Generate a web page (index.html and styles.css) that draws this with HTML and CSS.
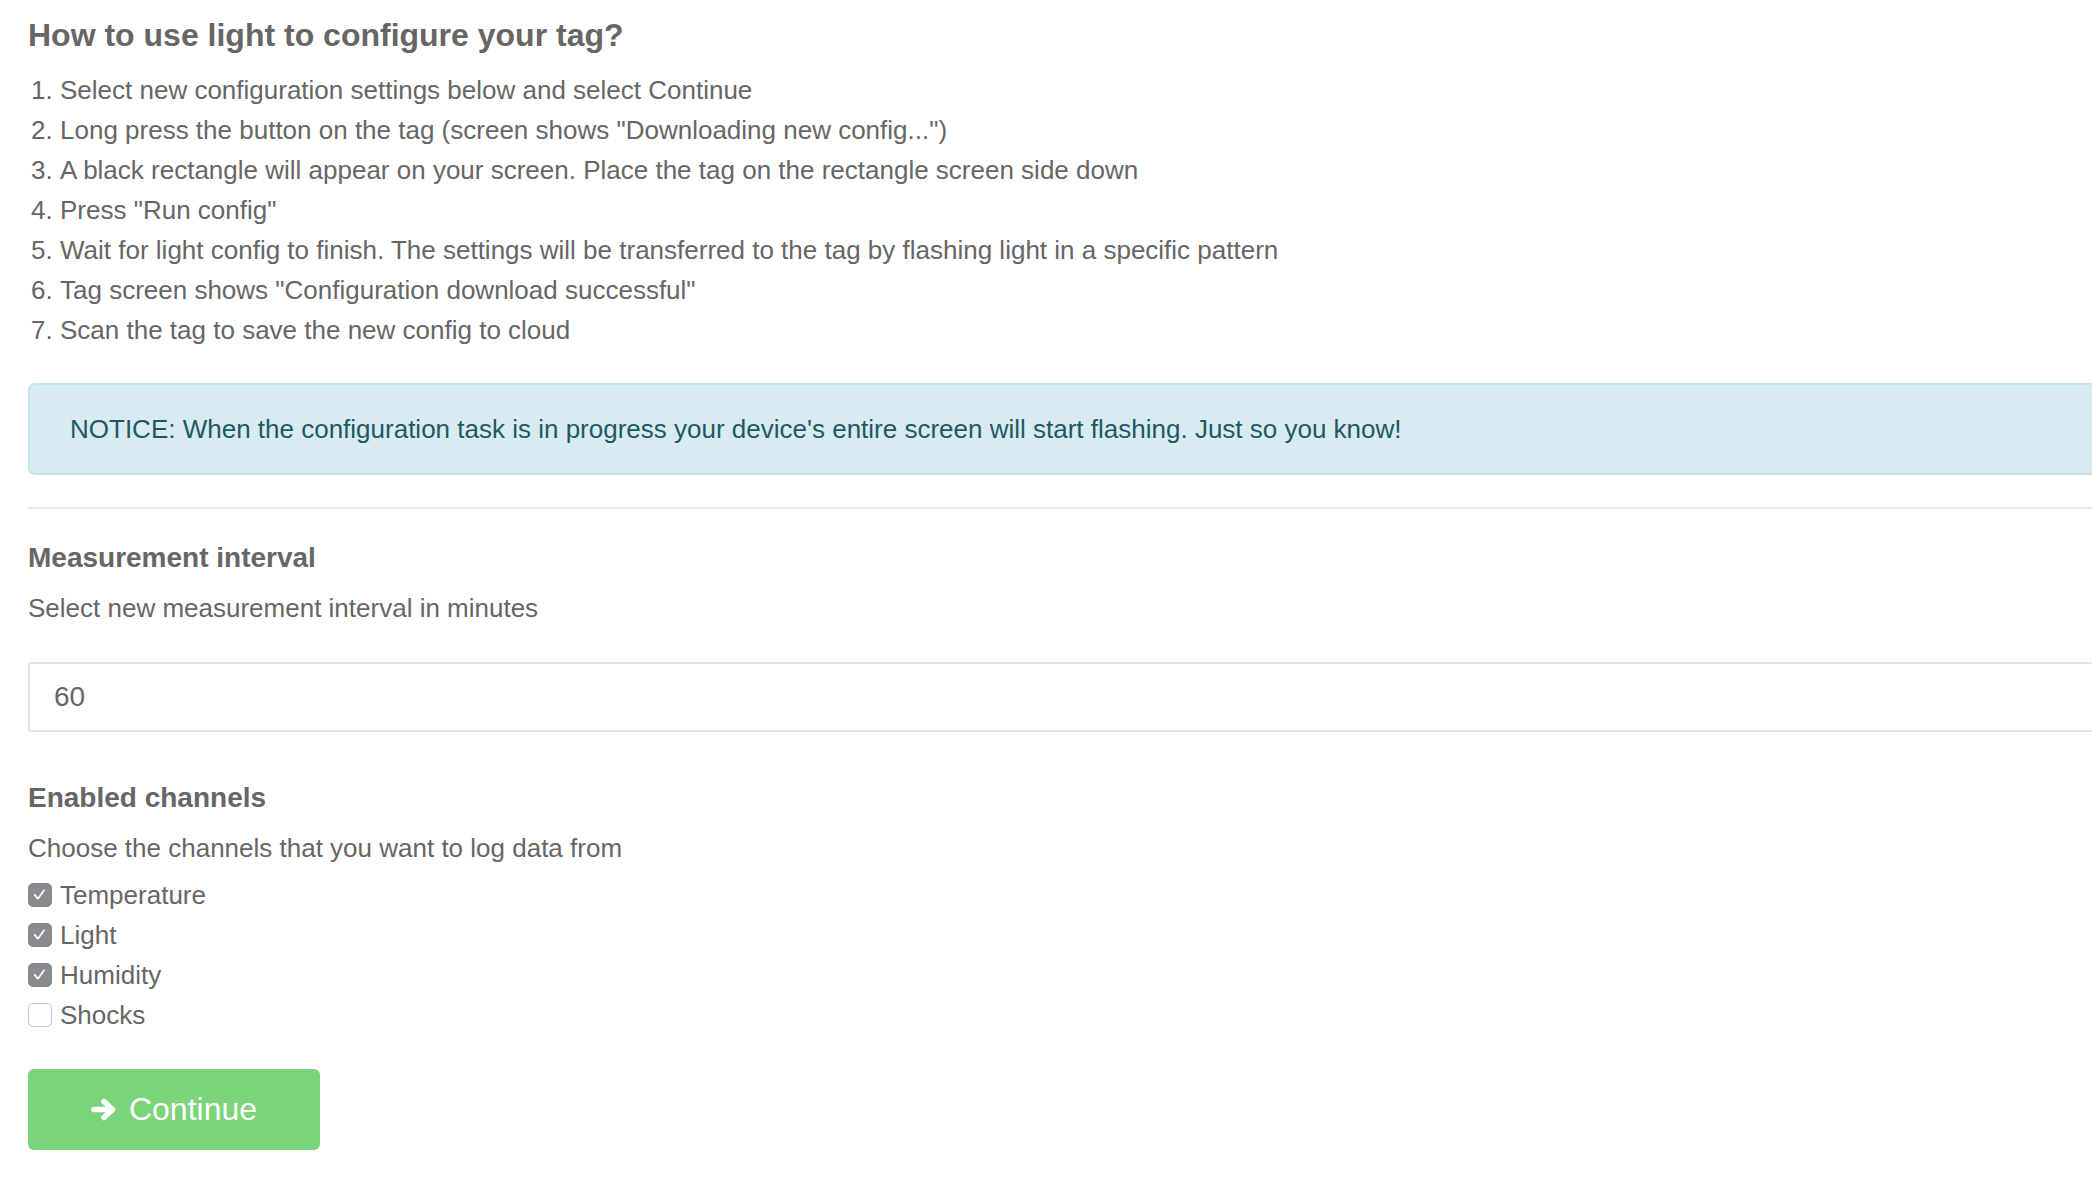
FILE: index.html
```html
<!doctype html>
<html lang="en">
	<head>
		<title>Light configuration</title>
		<meta charset="utf-8">
		<link rel="stylesheet" href="styles.css">
	</head>

	<body>
		<div class="page">
			<h3 class="title">How to use light to configure your tag?</h3>

			<ol class="steps">
				<li>Select new configuration settings below and select Continue</li>
				<li>Long press the button on the tag (screen shows "Downloading new config...")</li>
				<li>A black rectangle will appear on your screen. Place the tag on the rectangle screen side down</li>
				<li>Press "Run config"</li>
				<li>Wait for light config to finish. The settings will be transferred to the tag by flashing light in a specific pattern</li>
				<li>Tag screen shows "Configuration download successful"</li>
				<li>Scan the tag to save the new config to cloud</li>
			</ol>

			<div class="alert">
				NOTICE: When the configuration task is in progress your device's entire screen will start flashing. Just so you know!
			</div>

			<hr class="divider">

			<div class="field">
				<h4 class="field-title">Measurement interval</h4>
				<p class="field-help">Select new measurement interval in minutes</p>
				<input class="input" type="text" value="60">
			</div>

			<div class="field field-channels">
				<h4 class="field-title">Enabled channels</h4>
				<p class="field-help">Choose the channels that you want to log data from</p>
				<div class="checks">
					<label class="check">
						<span class="box checked"><svg viewBox="0 0 24 24"><polyline points="6.5,12.5 10.2,16.8 17.2,7.2"/></svg></span>
						Temperature
					</label>
					<label class="check">
						<span class="box checked"><svg viewBox="0 0 24 24"><polyline points="6.5,12.5 10.2,16.8 17.2,7.2"/></svg></span>
						Light
					</label>
					<label class="check">
						<span class="box checked"><svg viewBox="0 0 24 24"><polyline points="6.5,12.5 10.2,16.8 17.2,7.2"/></svg></span>
						Humidity
					</label>
					<label class="check">
						<span class="box"></span>
						Shocks
					</label>
				</div>
			</div>

			<button class="btn" type="button">
				<svg class="btn-icon" viewBox="0 0 26 23"><line x1="3" y1="11.5" x2="21" y2="11.5"/><polyline points="13,3.5 21.5,11.5 13,19.5"/></svg>
				Continue
			</button>
		</div>
	</body>
</html>
```

FILE: styles.css
```css
html, body {
	margin:0;
	padding:0;
	overflow:hidden;
	background:#ffffff;
}

body {
	font-family:"Liberation Sans", Arial, Helvetica, sans-serif;
	font-size:26px;
	line-height:40px;
	color:#666666;
}

.page {
	width:2200px;
	padding:15px 0 0 28px;
}

.title {
	margin:0;
	font-size:32px;
	line-height:40px;
	font-weight:bold;
}

.steps {
	margin:15px 0 0;
	padding-left:32px;
}

.alert {
	margin-top:33px;
	padding:24px 40px;
	border:2px solid #c4e3ea;
	border-radius:7px;
	background:#d7ebf0;
	color:#1f5864;
}

.divider {
	margin:32px 0 0;
	border:0;
	height:2px;
	background:#e6e6e6;
}

.field-title {
	margin:29px 0 0;
	font-size:28px;
	font-weight:bold;
}

.field-help {
	margin:10px 0 0;
}

.input {
	display:block;
	box-sizing:border-box;
	width:100%;
	height:70px;
	margin-top:34px;
	padding:0 24px;
	border:2px solid #e3e3e3;
	border-radius:3px;
	font-family:inherit;
	font-size:28px;
	color:#666666;
	background:#ffffff;
	outline:none;
}

.field-channels .field-title {
	margin-top:46px;
}

.checks {
	margin-top:7px;
}

.check {
	display:flex;
	align-items:center;
	gap:8px;
	height:40px;
}

.box {
	box-sizing:border-box;
	width:24px;
	height:24px;
	border:1.5px solid #c6c6c6;
	border-radius:5px;
	background:#ffffff;
}

.box.checked {
	border-color:#86868b;
	background:#8a8a8f;
}

.box svg {
	display:block;
	width:21px;
	height:21px;
	fill:none;
	stroke:#ffffff;
	stroke-width:2;
	stroke-linecap:round;
	stroke-linejoin:round;
}

.btn {
	display:flex;
	align-items:center;
	justify-content:center;
	gap:12px;
	width:292px;
	height:81px;
	margin-top:34px;
	padding:0;
	border:0;
	border-radius:6px;
	background:#7bd37a;
	color:#ffffff;
	font-family:inherit;
	font-size:32px;
}

.btn-icon {
	width:26px;
	height:23px;
	fill:none;
	stroke:#ffffff;
	stroke-width:5.5;
	stroke-linecap:round;
	stroke-linejoin:round;
}
```
